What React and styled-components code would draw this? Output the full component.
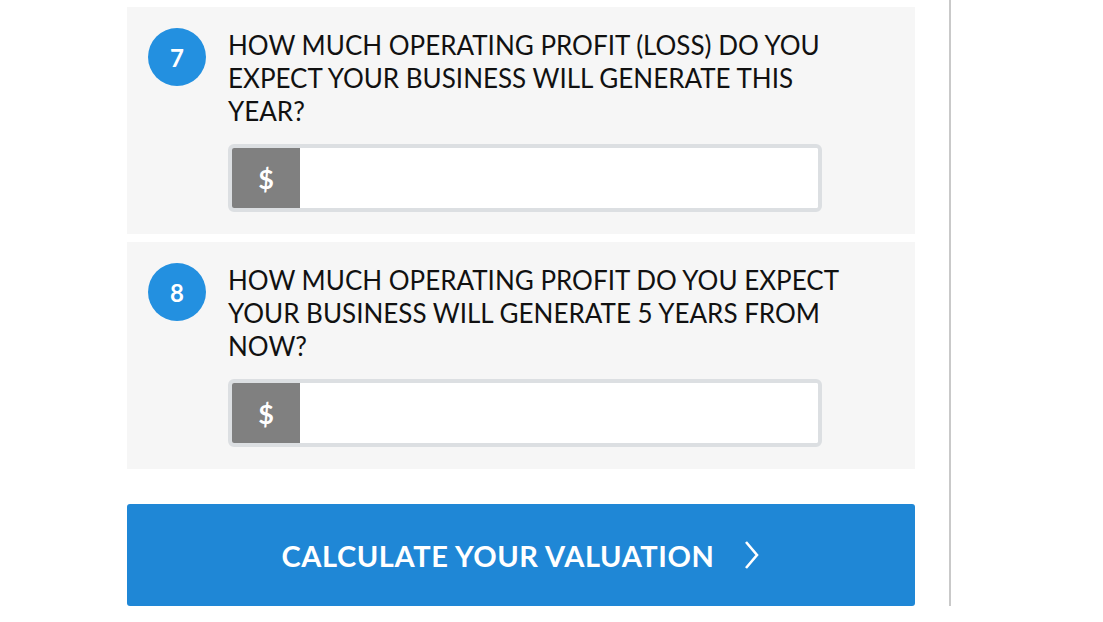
import React from 'react'
import styled, { createGlobalStyle } from 'styled-components'

const GlobalStyle = createGlobalStyle`
    body {
        margin: 0;
        background: #ffffff;
        font-family: Lato, "Open Sans", sans-serif;
    }
`

const Page = styled.div`
    display: flex;
`

const Column = styled.div`
    margin-left: 127px;
    width: 788px;
    padding: 7px 34px 0 0;
    border-right: 2px solid #c9c9c9;
    display: flex;
    flex-direction: column;
    gap: 8px;
`

const Card = styled.div`
    background: #f6f6f6;
    display: grid;
    grid-template-columns: 58px 1fr;
    column-gap: 22px;
    padding: 21px 62px 22px 21px;
`

const Badge = styled.div`
    width: 58px;
    height: 58px;
    border-radius: 50%;
    background: #2390e0;
    color: #fff;
    font-family: Lato, sans-serif;
    font-weight: 700;
    font-size: 24px;
    display: flex;
    align-items: center;
    justify-content: center;
`

const Body = styled.div`
    display: flex;
    flex-direction: column;
`

const Question = styled.h3`
    margin: 0;
    padding-top: 1px;
    font-family: Lato, sans-serif;
    font-weight: 400;
    font-size: 26px;
    line-height: 33px;
    color: #111;
    text-transform: uppercase;
`

const InputBox = styled.div`
    margin-top: 16px;
    width: 594px;
    display: flex;
    flex-shrink: 0;
    height: 68px;
    box-sizing: border-box;
    border: 4px solid #dcdfe2;
    border-radius: 6px;
    background: #fff;
    overflow: hidden;
`

const Prefix = styled.span`
    width: 68px;
    background: #808080;
    color: #fff;
    font-family: Lato, sans-serif;
    font-weight: 700;
    font-size: 27px;
    display: flex;
    align-items: center;
    justify-content: center;
`

const Field = styled.input`
    flex: 1;
    border: 0;
    outline: none;
    font-size: 22px;
    padding: 0 14px;
`

const Submit = styled.button`
    margin-top: 27px;
    height: 102px;
    border: 0;
    border-radius: 3px;
    background: #1f87d6;
    color: #fff;
    font-family: Lato, sans-serif;
    font-weight: 700;
    font-size: 29px;
    letter-spacing: 0.6px;
    display: flex;
    align-items: center;
    justify-content: center;
    gap: 26px;
    cursor: pointer;
`

const questions = [
    { n: 7, text: 'How much operating profit (loss) do you expect your business will generate this year?' },
    { n: 8, text: 'How much operating profit do you expect your business will generate 5 years from now?' },
]

export default function App() {
    return (<Page>
        <GlobalStyle />
        <Column>
            {questions.map(q =>
                <Card key={q.n}>
                    <Badge>{q.n}</Badge>
                    <Body>
                        <Question>{q.text}</Question>
                        <InputBox>
                            <Prefix>$</Prefix>
                            <Field type="text" />
                        </InputBox>
                    </Body>
                </Card>
            )}
            <Submit>
                CALCULATE YOUR VALUATION
                <svg width="20" height="30" viewBox="0 0 20 30" fill="none">
                    <path d="M5 2 L16 15 L5 28" stroke="#fff" strokeWidth="2.6" />
                </svg>
            </Submit>
        </Column>
    </Page>)
}
